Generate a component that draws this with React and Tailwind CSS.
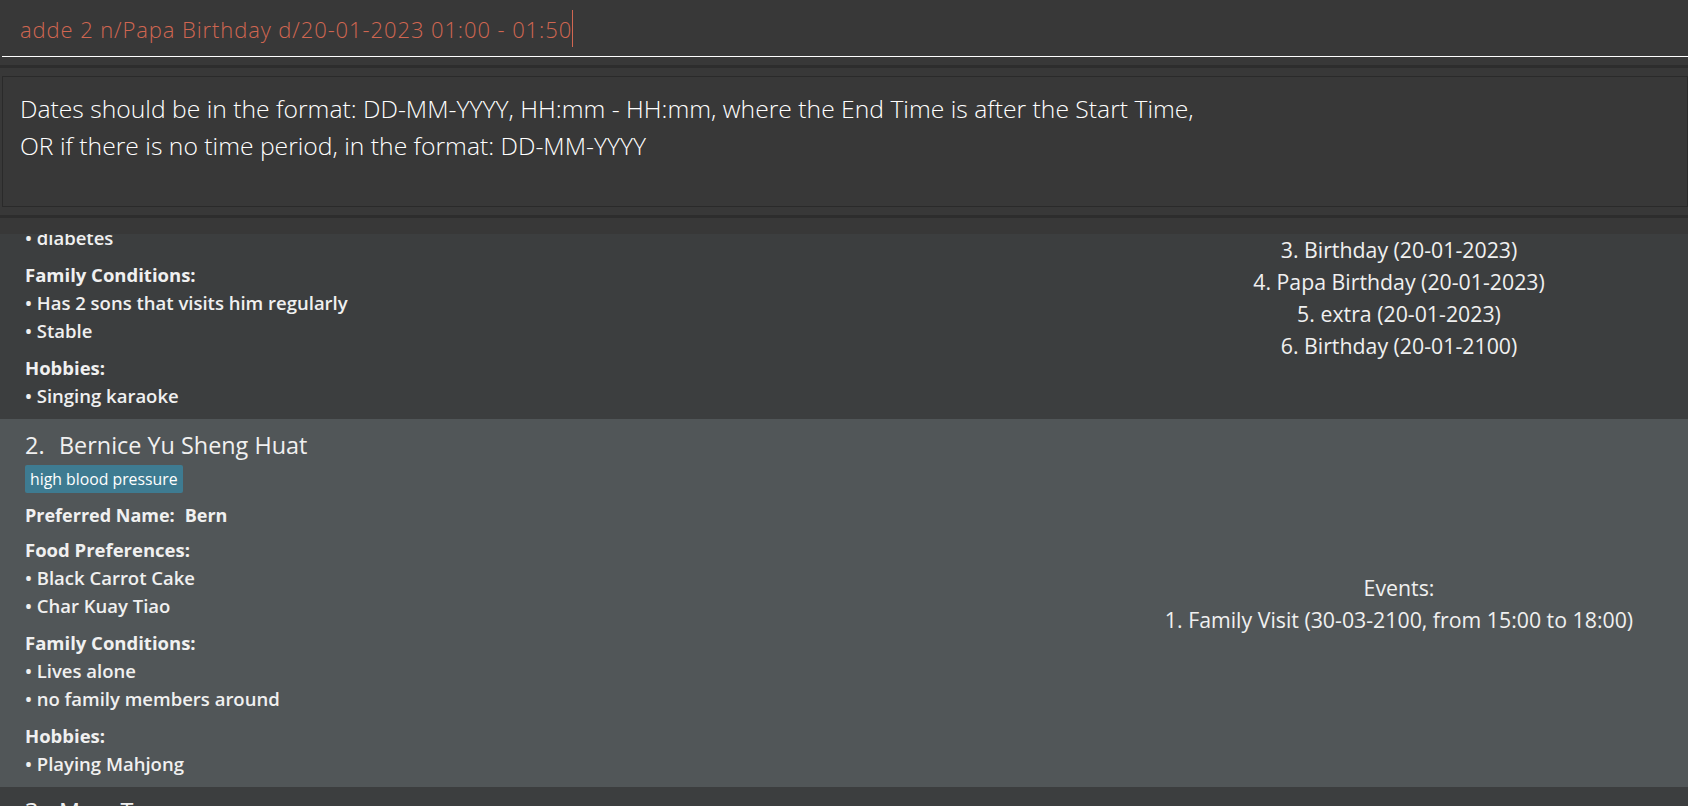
import React from "react";

function Section({ label, items, className, hideLabel }) {
  return (
    <div className={className}>
      <p className={`text-[18.5px] leading-[28px] font-bold ${hideLabel ? "invisible" : ""}`}>{label}</p>
      {items.map((it, i) => (
        <p key={i} className="text-[18.5px] leading-[28px] font-semibold">
          • {it}
        </p>
      ))}
    </div>
  );
}

function Card({ index, name, tag, preferred, food, family, hobbies, events, bg, className, hideTop, hiddenEvents = 0 }) {
  const hid = hideTop ? "invisible" : "";
  return (
    <div className={`flex ${bg} ${className || ""}`}>
      <div className="flex-1 pl-[25px] pt-[11px] pb-[9px]">
        <div className={`flex text-[23.4px] leading-[30px] ${hid}`}>
          <span className="w-[34px]">{index}.</span>
          <span>{name}</span>
        </div>
        <div className={`mt-[5px] flex ${hid}`}>
          <span className="h-[28px] px-[5px] bg-[#3e7b91] rounded-[2px] text-[15.8px] leading-[28px] text-white">
            {tag}
          </span>
        </div>
        <p className={`mt-[8px] text-[18px] leading-[28px] font-bold ${hid}`}>
          Preferred Name:<span className="ml-[10px]">{preferred}</span>
        </p>
        <Section className="mt-[7px]" label="Food Preferences:" items={food} hideLabel={hideTop} />
        <Section className="mt-[9px]" label="Family Conditions:" items={family} />
        <Section className="mt-[9px]" label="Hobbies:" items={hobbies} />
      </div>
      <div className="w-[578px] pt-[2px] flex flex-col justify-center items-center text-[21.3px] leading-[32px] font-medium">
        <p className={hiddenEvents > 0 ? "invisible" : ""}>Events:</p>
        {events.map((e, i) => (
          <p key={i} className={i + 1 < hiddenEvents ? "invisible" : ""}>
            {i + 1}. {e}
          </p>
        ))}
      </div>
    </div>
  );
}

export default function App() {
  return (
    <div className="w-[1688px] h-[806px] overflow-hidden bg-[#383838] flex flex-col font-['Open_Sans','Noto_Sans',sans-serif] text-[#f0f0f0]">
      {/* Command box */}
      <div className="h-[56px] flex items-start pl-[20px] shrink-0">
        <span className="mt-[15px] text-[22px] leading-[28px] font-light tracking-[0.9px] text-[#d06651] whitespace-pre">
          adde 2 n/Papa Birthday d/20-01-2023 01:00 - 01:50
        </span>
        <span className="mt-[10px] h-[37px] w-px bg-[#d06651]" />
      </div>
      <div className="ml-[2px] h-px bg-white shrink-0" />
      <div className="h-[8px] shrink-0" />
      <div className="h-[3px] bg-[#2d2d2d] shrink-0" />
      <div className="h-[8px] shrink-0" />

      {/* Result display */}
      <div className="ml-[2px] h-[131px] border border-[#2a2a2a] pl-[17px] pt-[13px] shrink-0 text-[24.7px] leading-[37px] font-light text-white">
        <p>Dates should be in the format: DD-MM-YYYY, HH:mm - HH:mm, where the End Time is after the Start Time,</p>
        <p>OR if there is no time period, in the format: DD-MM-YYYY</p>
      </div>
      <div className="h-[8px] shrink-0" />
      <div className="h-[3px] bg-[#2d2d2d] shrink-0" />
      <div className="h-[16px] shrink-0" />

      {/* Person list (scrolled) */}
      <div className="h-[572px] overflow-hidden shrink-0">
        <Card
          className="mt-[-155px]"
          bg="bg-[#3c3e3f]"
          hideTop
          hiddenEvents={3}
          index={1}
          name="Alex Yeoh"
          tag="diabetic"
          preferred="Alex"
          food={["diabetes"]}
          family={["Has 2 sons that visits him regularly", "Stable"]}
          hobbies={["Singing karaoke"]}
          events={[
            "Doctor Visit (10-01-2023)",
            "Lunch (15-01-2023)",
            "Birthday (20-01-2023)",
            "Papa Birthday (20-01-2023)",
            "extra (20-01-2023)",
            "Birthday (20-01-2100)",
          ]}
        />
        <Card
          bg="bg-[#515658]"
          index={2}
          name="Bernice Yu Sheng Huat"
          tag="high blood pressure"
          preferred="Bern"
          food={["Black Carrot Cake", "Char Kuay Tiao"]}
          family={["Lives alone", "no family members around"]}
          hobbies={["Playing Mahjong"]}
          events={["Family Visit (30-03-2100, from 15:00 to 18:00)"]}
        />
        <div className="bg-[#3c3e3f] h-[40px] pl-[25px] pt-[9px]">
          <div className="flex text-[23.4px] leading-[30px]">
            <span className="w-[34px]">3.</span>
            <span>Mary Tan</span>
          </div>
        </div>
      </div>
    </div>
  );
}
